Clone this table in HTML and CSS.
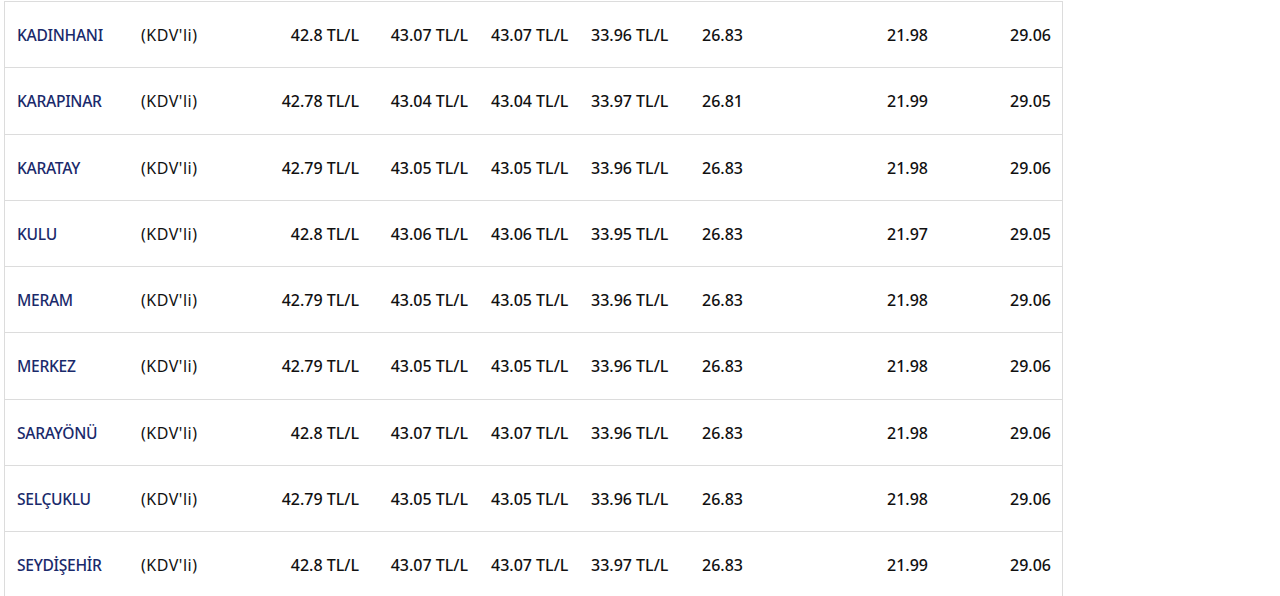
FILE: index.html
```html
<!DOCTYPE html>
<html lang="tr">
<head>
<meta charset="utf-8">
<title>Akaryakıt Fiyatları</title>
<link rel="stylesheet" href="styles.css">
</head>
<body>
<div class="price-table">
  <div class="row"><span class="name">KADINHANI</span><span class="tax">(KDV'li)</span><span class="num">42.8 TL/L</span><span class="num">43.07 TL/L</span><span class="num">43.07 TL/L</span><span class="num">33.96 TL/L</span><span class="num">26.83</span><span class="num">21.98</span><span class="num">29.06</span></div>
  <div class="row"><span class="name">KARAPINAR</span><span class="tax">(KDV'li)</span><span class="num">42.78 TL/L</span><span class="num">43.04 TL/L</span><span class="num">43.04 TL/L</span><span class="num">33.97 TL/L</span><span class="num">26.81</span><span class="num">21.99</span><span class="num">29.05</span></div>
  <div class="row"><span class="name">KARATAY</span><span class="tax">(KDV'li)</span><span class="num">42.79 TL/L</span><span class="num">43.05 TL/L</span><span class="num">43.05 TL/L</span><span class="num">33.96 TL/L</span><span class="num">26.83</span><span class="num">21.98</span><span class="num">29.06</span></div>
  <div class="row"><span class="name">KULU</span><span class="tax">(KDV'li)</span><span class="num">42.8 TL/L</span><span class="num">43.06 TL/L</span><span class="num">43.06 TL/L</span><span class="num">33.95 TL/L</span><span class="num">26.83</span><span class="num">21.97</span><span class="num">29.05</span></div>
  <div class="row"><span class="name">MERAM</span><span class="tax">(KDV'li)</span><span class="num">42.79 TL/L</span><span class="num">43.05 TL/L</span><span class="num">43.05 TL/L</span><span class="num">33.96 TL/L</span><span class="num">26.83</span><span class="num">21.98</span><span class="num">29.06</span></div>
  <div class="row"><span class="name">MERKEZ</span><span class="tax">(KDV'li)</span><span class="num">42.79 TL/L</span><span class="num">43.05 TL/L</span><span class="num">43.05 TL/L</span><span class="num">33.96 TL/L</span><span class="num">26.83</span><span class="num">21.98</span><span class="num">29.06</span></div>
  <div class="row"><span class="name">SARAYÖNÜ</span><span class="tax">(KDV'li)</span><span class="num">42.8 TL/L</span><span class="num">43.07 TL/L</span><span class="num">43.07 TL/L</span><span class="num">33.96 TL/L</span><span class="num">26.83</span><span class="num">21.98</span><span class="num">29.06</span></div>
  <div class="row"><span class="name">SELÇUKLU</span><span class="tax">(KDV'li)</span><span class="num">42.79 TL/L</span><span class="num">43.05 TL/L</span><span class="num">43.05 TL/L</span><span class="num">33.96 TL/L</span><span class="num">26.83</span><span class="num">21.98</span><span class="num">29.06</span></div>
  <div class="row"><span class="name">SEYDİŞEHİR</span><span class="tax">(KDV'li)</span><span class="num">42.8 TL/L</span><span class="num">43.07 TL/L</span><span class="num">43.07 TL/L</span><span class="num">33.97 TL/L</span><span class="num">26.83</span><span class="num">21.99</span><span class="num">29.06</span></div>
</div>
</body>
</html>
```
FILE: styles.css
```css
html, body {
  margin: 0;
  padding: 0;
  background: #fff;
}
body {
  font-family: "Noto Sans", "Liberation Sans", sans-serif;
  font-size: 16px;
  color: #111;
  overflow: hidden;
}
.price-table {
  margin: 1px 0 0 4px;
  width: 1059px;
  box-sizing: border-box;
  border-left: 1px solid #dcdcdc;
  border-right: 1px solid #dcdcdc;
}
.row {
  display: grid;
  grid-template-columns: 124px 121px 120px 109px 100px 100px 75px 185px 123px;
  align-items: center;
  height: 66.25px;
  box-sizing: border-box;
  border-top: 1px solid #dcdcdc;
}
.row > span {
  padding: 1px 11px 0 12px;
  white-space: nowrap;
}
.name {
  color: #1a2a6b;
  font-size: 15.6px;
  font-weight: 500;
  letter-spacing: -0.3px;
}
.tax {
  color: #111;
  letter-spacing: 0.5px;
}
.num {
  text-align: right;
  color: #111;
  font-weight: 500;
}
```
